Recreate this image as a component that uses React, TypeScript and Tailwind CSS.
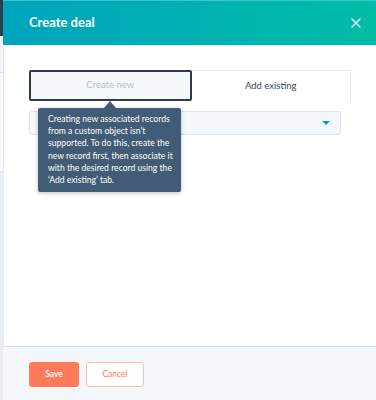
import { X } from "lucide-react";

const font = { fontFamily: "Lato, 'Open Sans', sans-serif" };

function SideStrip() {
  return (
    <div className="w-[3px] flex flex-col shrink-0">
      <div className="h-[36px] bg-[#2d3e50]" />
      <div className="h-[37px] bg-[#f2f5f8] border-b border-[#dfe3eb]" />
      <div className="h-[99px] bg-[#f5f8fa] border-b border-[#dfe3eb]" />
      <div className="flex-1 bg-[#e9eef3]" />
    </div>
  );
}

function Tooltip() {
  return (
    <div className="absolute left-[9px] top-[31px] w-[143px]">
      <div className="ml-[66px] w-0 h-0 border-l-[6px] border-r-[6px] border-b-[7px] border-l-transparent border-r-transparent border-b-[#425b76]" />
      <div className="bg-[#425b76] rounded-[2px] shadow-[0_1px_4px_rgba(0,0,0,0.25)] h-[84px] pl-[10px] pt-[5px] text-white text-[8.6px] leading-[12.2px] whitespace-nowrap">
        Creating new associated records
        <br />
        from a custom object isn’t
        <br />
        supported. To do this, create the
        <br />
        new record first, then associate it
        <br />
        with the desired record using the
        <br />
        ‘Add existing’ tab.
      </div>
    </div>
  );
}

export default function App() {
  return (
    <div className="w-[376px] h-[400px] flex overflow-hidden bg-white" style={font}>
      <SideStrip />
      <div className="flex-1 flex flex-col">
        <div className="h-[45px] shrink-0 flex items-center justify-between pl-[26px] pr-[12px] bg-gradient-to-r from-[#00a4bd] to-[#00bda5] border-t border-[#3cc3d0]">
          <span className="text-white text-[13px] font-bold">Create deal</span>
          <X className="w-[16px] h-[16px] text-white" strokeWidth={1.8} />
        </div>

        <div className="flex-1 border-l border-[#e5eaf0] pl-[25px] pr-[25px] pt-[25px]">
          <div className="relative">
            <div className="flex h-[31px]">
              <div className="flex-1 flex items-center justify-center bg-[#f5f8fa] border-2 border-[#2f3a45] rounded-[2px] text-[#b0c1d4] text-[9.5px]">
                Create new
              </div>
              <div className="flex-1 flex items-center justify-center bg-white border-t border-r border-[#e5eaf0] text-[#33475b] text-[9.5px]">
                Add existing
              </div>
            </div>
            <div className="mt-[10px] mr-[10px] h-[24px] bg-[#f5f8fa] border border-[#dfe3eb] rounded-[3px] flex items-center justify-end pr-[10px]">
              <div className="w-0 h-0 border-l-[4px] border-r-[4px] border-t-[4px] border-l-transparent border-r-transparent border-t-[#00a4bd]" />
            </div>
            <Tooltip />
          </div>
        </div>

        <div className="h-[54px] shrink-0 bg-[#f5f8fa] border-t border-[#dfe3eb] flex items-start gap-[7px] pl-[26px] pt-[15px]">
          <button className="w-[50px] h-[25px] rounded-[3px] bg-[#ff7a59] border border-[#ff7a59] text-white text-[8.5px] font-semibold">
            Save
          </button>
          <button className="w-[58px] h-[25px] rounded-[3px] bg-white border border-[#ffbcab] text-[#ff7a59] text-[8.5px]">
            Cancel
          </button>
        </div>
      </div>
    </div>
  );
}
